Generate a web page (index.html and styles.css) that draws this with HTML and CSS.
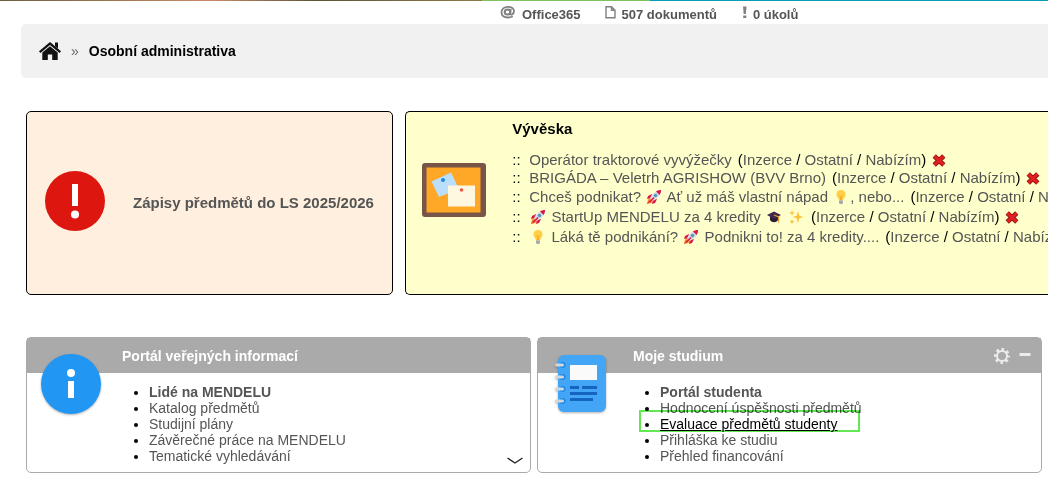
FILE: index.html
```
<!DOCTYPE html>
<html lang="cs">
<head>
  <meta charset="UTF-8" />
  <meta name="viewport" content="width=device-width, initial-scale=1.0" />
  <title>Osobní administrativa</title>
  <link rel="stylesheet" href="styles.css">
</head>
<body>
  <!-- shared symbols -->
  <svg class="symbols" aria-hidden="true">
    <symbol id="rocket" viewBox="0 0 16 16">
      <path d="M1 15 L2 10 L5 8 L8 11 L6 14 Z" fill="#f9a63a"/>
      <path d="M1 15 L2.500 11.500 L4.500 11.500 L4.500 13.500 Z" fill="#ee4b35"/>
      <path d="M6 5 L2 7 L1 10 L5 9 Z M11 10 L9 14 L6 15 L7 11 Z" fill="#dc1648"/>
      <path d="M15 1 C10 1 7 4 4 9 L7 12 C12 9 15 6 15 1 Z" fill="#d7dfe6"/>
      <path d="M15 1 C13 1 11.500 1.500 10 2.500 L13.500 6 C14.500 4.500 15 3 15 1 Z" fill="#dc1648"/>
      <circle cx="9.500" cy="6.500" r="1.800" fill="#5796bd"/>
      <path d="M8 8.500 L3.500 13" stroke="#dc1648" stroke-width="1.500"/>
    </symbol>
    <symbol id="bulb" viewBox="0 0 16 16">
      <path d="M8 1 C5 1 3.500 3 3.500 5.500 C3.500 8 5.500 9 6 11.500 H10 C10.500 9 12.500 8 12.500 5.500 C12.500 3 11 1 8 1 Z" fill="#fdd046"/>
      <path d="M6.500 6 L7.500 8 V11.500 M9.500 6 L8.500 8 V11.500" fill="none" stroke="#f3a52c" stroke-width="0.800"/>
      <path d="M6 11.500 H10 V14 L9 15 H7 L6 14 Z" fill="#9eabb1"/>
    </symbol>
    <symbol id="cap" viewBox="0 0 16 16">
      <path d="M4 7 V11 C6 14 10 14 12 11 V7 Z" fill="#2b1d38"/>
      <path d="M1 6 L8 2.500 L15 6 L8 10 Z" fill="#402a52"/>
      <path d="M8 6 L12.500 8 V13.500" fill="none" stroke="#e99a26" stroke-width="1.300"/>
    </symbol>
    <symbol id="sparkles" viewBox="0 0 16 16">
      <path d="M10 2 L11.300 6.700 L15.500 8 L11.300 9.300 L10 14.500 L8.700 9.300 L4.500 8 L8.700 6.700 Z M4 1 L4.700 3.300 L7 4 L4.700 4.700 L4 7 L3.300 4.700 L1 4 L3.300 3.300 Z M4 10 L4.700 12 L6.500 12.700 L4.700 13.400 L4 15.500 L3.300 13.400 L1.500 12.700 L3.300 12 Z" fill="#fbc139"/>
    </symbol>
    <symbol id="cross" viewBox="0 0 14 13">
      <path d="M2.200 2 L11.800 11 M11.800 2 L2.200 11" stroke="#8c1212" stroke-width="4.800"/>
      <path d="M2.400 2.200 L11.600 10.800 M11.600 2.200 L2.400 10.800" stroke="#e02020" stroke-width="3.200"/>
    </symbol>
  </svg>

  <div class="banner"></div>
  <header class="top-links">
    <a href="#">
      <svg class="at" viewBox="0 0 16 14">
        <ellipse cx="7.500" cy="6" rx="2.800" ry="2.600" fill="none" stroke="#808080" stroke-width="2"/>
        <path d="M10.800 3 L10 7.500 C10 9.500 14 8.500 14 5.300 C14 2.500 11.500 0.900 8 0.900 C4 0.900 1.500 3 1.500 6.300 C1.500 10 4.500 11.500 8 11.500 C10 11.500 11.500 11 12.800 10.200" fill="none" stroke="#808080" stroke-width="1.800"/>
      </svg>
      Office365
    </a>
    <a href="#">
      <svg class="doc" viewBox="0 0 11 14">
        <path d="M1 0.800 H6.500 L10 4.300 V11.800 H1 Z M6.500 0.800 V4.300 H10" fill="none" stroke="#808080" stroke-width="1.400"/>
      </svg>
      507 dokumentů
    </a>
    <a href="#">
      <svg class="mark" viewBox="0 0 6 14">
        <path d="M2 0.500 H5.500 L4.800 8 H2.700 Z M2.200 9.500 H5.300 V12 H2.200 Z" fill="#808080"/>
      </svg>
      0 úkolů
    </a>
  </header>

  <nav class="breadcrumb">
    <a href="#" aria-label="Domů">
      <svg class="home" viewBox="0 0 22 18">
        <path d="M11 0 L22 9.300 L20.600 11 L11 3 L1.400 11 L0 9.300 Z M16 0.500 H19 V6.500 L16 4 Z" fill="#111"/>
        <path d="M11 4.200 L18.700 10.600 V18 H13.200 V12.500 H8.800 V18 H3.300 V10.600 Z" fill="#111"/>
      </svg>
    </a>
    <span class="sep">»</span>
    <strong>Osobní administrativa</strong>
  </nav>

  <main>
    <div class="notices">
      <section class="notice alert">
        <svg class="alert-icon" viewBox="0 0 60 60">
          <circle cx="30" cy="30" r="30" fill="#dd1710"/>
          <rect x="27" y="13" width="6" height="22" fill="#fff"/>
          <circle cx="30" cy="43.500" r="4" fill="#fff"/>
        </svg>
        <a href="#">Zápisy předmětů do LS 2025/2026</a>
      </section>

      <section class="notice board">
        <svg class="board-icon" viewBox="0 0 64 54">
          <rect width="64" height="54" rx="3" fill="#795548"/>
          <rect x="4.500" y="4.500" width="54" height="45" fill="#ffa726"/>
          <path d="M9.500 18.500 L29 9.500 L37 26 L17 34 Z" fill="#bbdefb"/>
          <rect x="26" y="22.500" width="27" height="21" fill="#fff8e1"/>
          <circle cx="21" cy="17" r="2" fill="#1e88e5"/>
          <circle cx="39.500" cy="27" r="1.800" fill="#f05545"/>
        </svg>
        <div class="board-text">
          <h2>Vývěska</h2>
          <ul>
            <li><span class="dots">::</span><a href="#">Operátor traktorové vyvýžečky</a><span class="cat">(<a href="#">Inzerce</a> / <a href="#">Ostatní</a> / <a href="#">Nabízím</a>)</span><button aria-label="Skrýt"><svg viewBox="0 0 14 13"><use href="#cross"/></svg></button></li>
            <li><span class="dots">::</span><a href="#">BRIGÁDA – Veletrh AGRISHOW (BVV Brno)</a><span class="cat">(<a href="#">Inzerce</a> / <a href="#">Ostatní</a> / <a href="#">Nabízím</a>)</span><button aria-label="Skrýt"><svg viewBox="0 0 14 13"><use href="#cross"/></svg></button></li>
            <li class="tall"><span class="dots">::</span><a href="#">Chceš podnikat? <svg class="emoji"><use href="#rocket"/></svg> Ať už máš vlastní nápad <svg class="emoji"><use href="#bulb"/></svg>, nebo...</a><span class="cat">(<a href="#">Inzerce</a> / <a href="#">Ostatní</a> / <a href="#">Nabízím</a>)</span></li>
            <li class="tall"><span class="dots">::</span><a href="#"><svg class="emoji"><use href="#rocket"/></svg> StartUp MENDELU za 4 kredity <svg class="emoji"><use href="#cap"/></svg> <svg class="emoji"><use href="#sparkles"/></svg></a><span class="cat">(<a href="#">Inzerce</a> / <a href="#">Ostatní</a> / <a href="#">Nabízím</a>)</span><button aria-label="Skrýt"><svg viewBox="0 0 14 13"><use href="#cross"/></svg></button></li>
            <li class="tall"><span class="dots">::</span><a href="#"><svg class="emoji"><use href="#bulb"/></svg> Láká tě podnikání? <svg class="emoji"><use href="#rocket"/></svg> Podnikni to! za 4 kredity....</a><span class="cat">(<a href="#">Inzerce</a> / <a href="#">Ostatní</a> / <a href="#">Nabízím</a>)</span></li>
          </ul>
        </div>
      </section>
    </div>

    <div class="portals">
      <section class="portal">
        <header><h2>Portál veřejných informací</h2></header>
        <svg class="portal-icon" viewBox="0 0 62 62">
          <circle cx="31" cy="31" r="30" fill="#2196f3"/>
          <circle cx="31" cy="20" r="4" fill="#fff"/>
          <rect x="28" y="28" width="6" height="17" fill="#fff"/>
        </svg>
        <ul>
          <li><a href="#"><b>Lidé na MENDELU</b></a></li>
          <li><a href="#">Katalog předmětů</a></li>
          <li><a href="#">Studijní plány</a></li>
          <li><a href="#">Závěrečné práce na MENDELU</a></li>
          <li><a href="#">Tematické vyhledávání</a></li>
        </ul>
        <button class="more" aria-label="Zobrazit více">
          <svg viewBox="0 0 16 8"><path d="M0.500 1 L8 6 L15.500 1" fill="none" stroke="#222" stroke-width="1.400"/></svg>
        </button>
      </section>

      <section class="portal">
        <header>
          <h2>Moje studium</h2>
          <button class="gear" aria-label="Nastavení">
            <svg viewBox="0 0 16 16">
              <circle cx="8" cy="8" r="6.500" fill="none" stroke="#ececec" stroke-width="3" stroke-dasharray="2.550 2.550" stroke-dashoffset="1.275"/>
              <circle cx="8" cy="8" r="5" fill="none" stroke="#ececec" stroke-width="2"/>
            </svg>
          </button>
          <button class="minus" aria-label="Sbalit">
            <svg viewBox="0 0 12 16"><rect x="0.500" y="5" width="11" height="3" fill="#ececec"/></svg>
          </button>
        </header>
        <svg class="portal-icon" viewBox="2 0 62 62">
          <rect x="9" y="2" width="48" height="57" rx="6" fill="#42a5f5"/>
          <g fill="#1e88e5">
            <circle cx="13.500" cy="12" r="3"/><circle cx="13.500" cy="24" r="3"/><circle cx="13.500" cy="36" r="3"/><circle cx="13.500" cy="48" r="3"/>
          </g>
          <path d="M7.500 12 H13.500 M7.500 24 H13.500 M7.500 36 H13.500 M7.500 48 H13.500" stroke="#cfd8dc" stroke-width="3" stroke-linecap="round"/>
          <rect x="21" y="12" width="27" height="15" fill="#fafafa"/>
          <path d="M21 34.500 H30 M33 34.500 H48 M21 40.500 H48 M21 46.500 H44" stroke="#1565c0" stroke-width="3"/>
        </svg>
        <ul>
          <li><a href="#"><b>Portál studenta</b></a></li>
          <li><a href="#">Hodnocení úspěšnosti předmětů</a></li>
          <li class="marked"><a href="#">Evaluace předmětů studenty</a></li>
          <li><a href="#">Přihláška ke studiu</a></li>
          <li><a href="#">Přehled financování</a></li>
        </ul>
      </section>
    </div>
  </main>
</body>
</html>
```
FILE: styles.css
```
*,
*::after {
  box-sizing: border-box;
}
body {
  margin: 0;
  font-family: "Liberation Sans", Arial, sans-serif;
  font-size: 14px;
  line-height: 16px;
  color: #000;
  background-color: #fff;
  overflow-x: hidden;
}
a {
  color: #555;
  text-decoration: none;
}
h2 {
  margin: 0;
  font-size: 14px;
  font-weight: bold;
}
ul {
  margin: 0;
}
button {
  padding: 0;
  border: none;
  background: none;
  cursor: pointer;
}
svg {
  display: block;
  flex: none;
}
.symbols {
  position: absolute;
  width: 0;
  height: 0;
}
.banner {
  height: 1px;
  background: linear-gradient(to right, #6b5f3c, #c98a68 20%, #5d5436 30%, #8d7a4a 46%, #7dc35b 46%, #7dc35b 62%, #0a9bb5 62%);
}
.top-links {
  display: flex;
  gap: 24px;
  height: 23px;
  padding-top: 5px;
  padding-left: 500px;
}
.top-links a {
  display: flex;
  gap: 6px;
  font-size: 13px;
  line-height: 18px;
  font-weight: bold;
}
.top-links svg {
  height: 14px;
}
.at {
  width: 16px;
}
.doc {
  width: 11px;
}
.mark {
  width: 6px;
}
.breadcrumb {
  display: flex;
  align-items: center;
  height: 54px;
  margin-left: 21px;
  padding-left: 18px;
  background-color: #f1f1f1;
  border-radius: 5px 0 0 5px;
}
.home {
  width: 22px;
  height: 18px;
}
.sep {
  margin: 0 10px;
  color: #666;
}
main {
  padding: 33px 0 4px 26px;
}
.notices {
  display: grid;
  grid-template-columns: 4fr 7fr;
  gap: 12px;
}
.notice {
  display: flex;
  align-items: center;
  min-width: 0;
  min-height: 184px;
  border: 1px solid #000;
  border-radius: 5px;
  font-size: 15px;
}
.alert {
  gap: 28px;
  padding-left: 18px;
  background-color: #ffefde;
}
.alert a {
  font-weight: bold;
}
.alert-icon {
  width: 60px;
  height: 60px;
  margin-bottom: 4px;
}
.board {
  gap: 26px;
  padding-left: 16px;
  background-color: #ffffcc;
  border-right: none;
  border-radius: 5px 0 0 5px;
  overflow: hidden;
}
.board-icon {
  width: 64px;
  height: 54px;
  margin-bottom: 26px;
}
.board-text {
  align-self: flex-start;
  padding-top: 9px;
}
.board h2 {
  font-size: 15px;
}
.board ul {
  margin-top: 14px;
  padding: 0;
  list-style: none;
}
.board li {
  display: flex;
  line-height: 18px;
  white-space: nowrap;
}
.board li.tall {
  line-height: 20px;
}
.dots {
  width: 17px;
}
.cat {
  margin-left: 6px;
}
.board button {
  margin-left: 6px;
}
.board button svg {
  width: 14px;
  height: 13px;
}
.emoji {
  display: inline-block;
  width: 16px;
  height: 16px;
  margin: 0 1px;
  vertical-align: -3px;
}
.portals {
  display: flex;
  gap: 6px;
  margin-top: 42px;
  padding-right: 6px;
}
.portal {
  position: relative;
  flex: 1;
  border: 1px solid #aaa;
  border-radius: 5px;
}
.portal header {
  display: flex;
  align-items: center;
  gap: 9px;
  height: 35px;
  padding: 0 10px 0 95px;
  background-color: #aaa;
}
.portal h2 {
  flex: 1;
  color: #fff;
}
.portal header svg {
  height: 16px;
}
.gear svg {
  width: 16px;
}
.minus svg {
  width: 12px;
}
/* sits across the header and the list */
.portal-icon {
  position: absolute;
  top: 15px;
  left: 13px;
  width: 62px;
  height: 62px;
  filter: drop-shadow(0 1px 1px rgba(0, 0, 0, 0.3));
}
.portal ul {
  padding: 11px 0 8px 122px;
}
.more {
  position: absolute;
  right: 7px;
  bottom: 7px;
}
.more svg {
  width: 16px;
  height: 8px;
}
.marked {
  position: relative;
}
.marked a {
  color: #000;
  text-decoration: underline;
}
.marked::after {
  content: "";
  position: absolute;
  top: -6px;
  left: -21px;
  width: 221px;
  height: 22px;
  border: 2px solid #62e854;
  mix-blend-mode: multiply;
  pointer-events: none;
}
```
